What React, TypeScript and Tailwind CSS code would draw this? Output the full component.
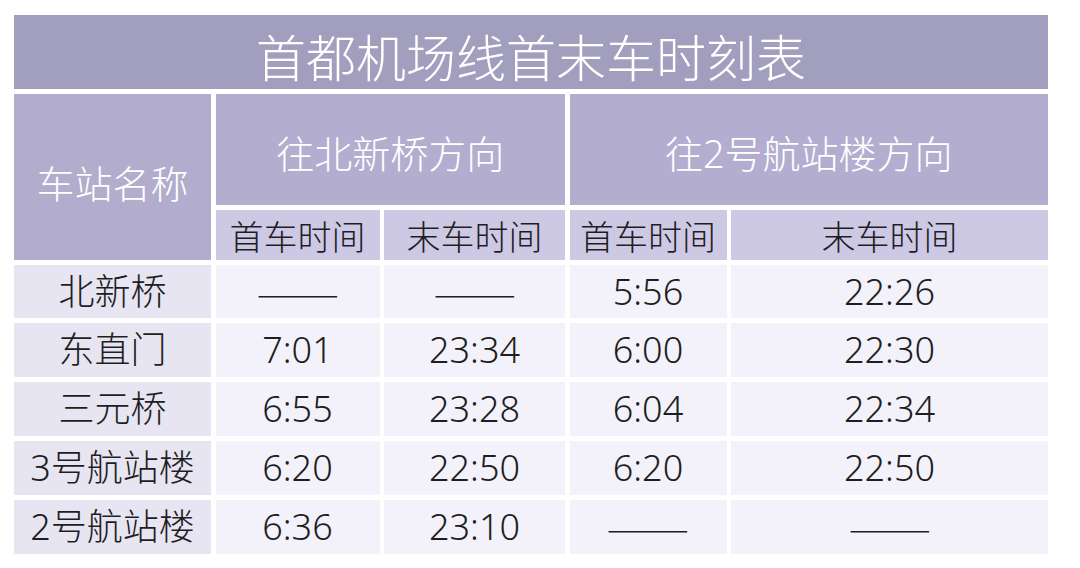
const rows = [
  ["北新桥", "——", "——", "5:56", "22:26"],
  ["东直门", "7:01", "23:34", "6:00", "22:30"],
  ["三元桥", "6:55", "23:28", "6:04", "22:34"],
  ["3号航站楼", "6:20", "22:50", "6:20", "22:50"],
  ["2号航站楼", "6:36", "23:10", "——", "——"],
];

function Cell({ text, station }: { text: string; station?: boolean }) {
  const dash = text === "——";
  return (
    <div
      className={`flex items-center justify-center font-light text-[#1e1e22] ${
        station ? "bg-[#e7e5f2]" : "bg-[#f3f2fa]"
      } text-[36px]`}
    >
      {dash ? (
        <span className="inline-block scale-x-[1.39] pb-[2px] font-['Noto_Sans_CJK_SC',sans-serif]">
          {text}
        </span>
      ) : (
        text
      )}
    </div>
  );
}

export default function App() {
  return (
    <main
      className="w-[1080px] h-[568px] bg-white pt-[15px] pl-[14px]"
      style={{ fontFamily: '"Noto Sans", "Noto Sans CJK SC", sans-serif' }}
    >
      <div className="grid w-[1034px] grid-cols-[197px_164px_181px_157px_317px] grid-rows-[74px_111px_50px_53px_54px_54px_54px_54px] gap-x-[4.5px] gap-y-[5px] leading-none">
        {/* TITLE */}
        <div className="col-span-5 flex items-center justify-center bg-[#a29ebe] pt-[12px] text-[50px] font-light text-white">
          首都机场线首末车时刻表
        </div>

        {/* HEADERS */}
        <div className="row-span-2 flex items-center justify-center bg-[#b2adcd] pt-[12px] text-[38px] font-light text-white">
          车站名称
        </div>
        <div className="col-span-2 flex items-center justify-center bg-[#b3aecf] pt-[6px] text-[38px] font-light text-white">
          往北新桥方向
        </div>
        <div className="col-span-2 flex items-center justify-center bg-[#b3aecf] pt-[6px] text-[38px] font-light text-white">
          往2号航站楼方向
        </div>
        <div className="flex items-center justify-center bg-[#cdc9e5] pt-[4px] text-[34px] font-light text-[#1e1e22]">首车时间</div>
        <div className="flex items-center justify-center bg-[#cdc9e5] pt-[4px] text-[34px] font-light text-[#1e1e22]">末车时间</div>
        <div className="flex items-center justify-center bg-[#cdc9e5] pt-[4px] text-[34px] font-light text-[#1e1e22]">首车时间</div>
        <div className="flex items-center justify-center bg-[#cdc9e5] pt-[4px] text-[34px] font-light text-[#1e1e22]">末车时间</div>

        {/* DATA */}
        {rows.map((r) =>
          r.map((t, i) => <Cell key={r[0] + i} text={t} station={i === 0} />)
        )}
      </div>
    </main>
  );
}
